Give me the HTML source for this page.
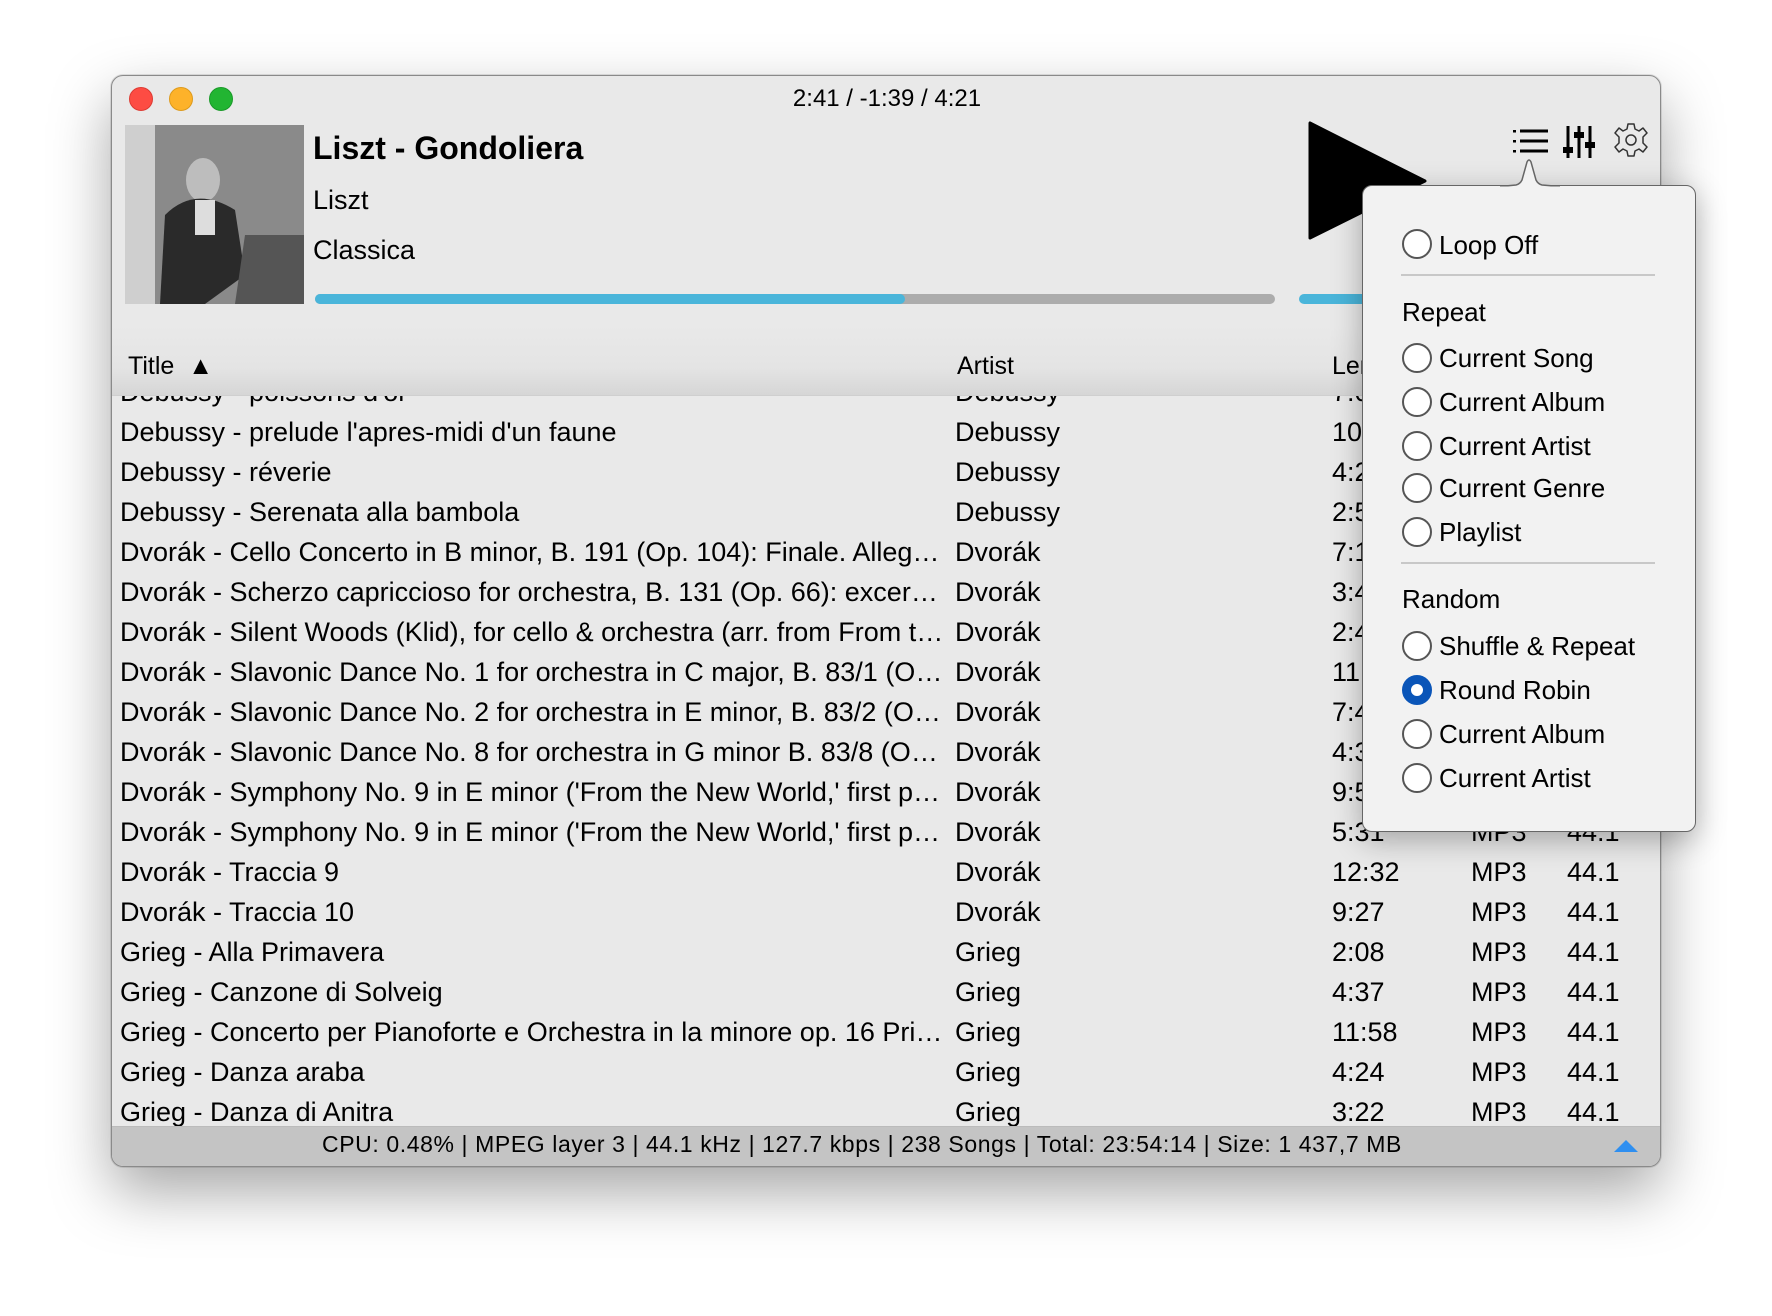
<!DOCTYPE html>
<html><head><meta charset="utf-8"><style>
*{margin:0;padding:0;box-sizing:border-box}
body{width:1772px;height:1316px;background:#fff;font-family:"Liberation Sans",sans-serif;position:relative;overflow:hidden;color:#000}
.win{position:absolute;left:111px;top:75px;width:1550px;height:1092px;border-radius:12px;background:#e9e9e9;border:1px solid #8a8a8a;box-shadow:0 25px 60px rgba(0,0,0,.35),0 0 0 1px rgba(0,0,0,.1);overflow:hidden}
.a{position:absolute;white-space:nowrap}
.tl{position:absolute;top:11px;width:24px;height:24px;border-radius:50%}
.row{position:absolute;left:0;width:1550px;height:40px;font-size:27px;line-height:40px}
.row span{position:absolute;top:0;white-space:nowrap;overflow:hidden;text-overflow:ellipsis}
.pop{position:absolute;left:1362px;top:185px;width:334px;height:647px;background:#f2f2f2;border:1.5px solid #666;border-radius:10px;box-shadow:0 8px 30px rgba(0,0,0,.3)}
.it{position:absolute;left:76px;font-size:26px;line-height:30px;white-space:nowrap}
.rd{position:absolute;left:39px;width:30px;height:30px;border-radius:50%;border:2px solid #555;background:#fff}
.sep{position:absolute;left:38px;width:254px;height:2px;background:#c8c8c8}
</style></head><body>
<div class="win">
  <div class="tl" style="left:17px;background:#fd4c43;border:1px solid #dd3b33"></div>
  <div class="tl" style="left:57px;background:#fdb22a;border:1px solid #dd9a1c"></div>
  <div class="tl" style="left:97px;background:#22b532;border:1px solid #1a9a29"></div>
  <div class="a" style="left:0;width:1550px;text-align:center;top:9px;font-size:24px">2:41 / -1:39 / 4:21</div>
  <div class="a" style="left:13px;top:49px;width:179px;height:179px;">
    <svg width="179" height="179"><rect width="179" height="179" fill="#8a8a8a"/><rect width="30" height="179" fill="#cfcfcf"/><ellipse cx="78" cy="55" rx="17" ry="22" fill="#bdbdbd"/><path d="M40 90 Q70 60 110 85 L120 150 L80 179 L35 179 Z" fill="#2a2a2a"/><rect x="70" y="75" width="20" height="35" fill="#ddd"/><path d="M120 110 L179 110 L179 179 L110 179 Z" fill="#555"/></svg>
  </div>
  <div class="a" style="left:201px;top:54px;font-size:32px;font-weight:bold">Liszt - Gondoliera</div>
  <div class="a" style="left:201px;top:109px;font-size:27px">Liszt</div>
  <div class="a" style="left:201px;top:159px;font-size:27px">Classica</div>
  <div class="a" style="left:203px;top:218px;width:960px;height:10px;border-radius:5px;background:#acacac"><div style="width:590px;height:10px;border-radius:5px;background:#4ab5da"></div></div>
  <div class="a" style="left:1187px;top:218px;width:120px;height:10px;border-radius:5px;background:#4ab5da"></div>
  <svg class="a" style="left:1196px;top:45px" width="120" height="120"><path d="M2 2 L2 117 L117 60 Z" fill="#000" stroke="#000" stroke-width="3" stroke-linejoin="round"/></svg>
  <svg class="a" style="left:1400px;top:50px" width="140" height="40">
    <g stroke="#000" stroke-width="3"><line x1="8" y1="5" x2="36" y2="5"/><line x1="8" y1="15" x2="36" y2="15"/><line x1="8" y1="25" x2="36" y2="25"/></g>
    <g fill="#000"><rect x="1" y="4" width="3" height="2.5"/><rect x="1" y="14" width="3" height="2.5"/><rect x="1" y="24" width="3" height="2.5"/></g>
    <g stroke="#000" stroke-width="3"><line x1="56" y1="0" x2="56" y2="32"/><line x1="67" y1="0" x2="67" y2="32"/><line x1="78" y1="0" x2="78" y2="32"/></g>
    <rect x="51" y="21" width="10" height="6" fill="#000"/><rect x="62" y="6" width="10" height="6" fill="#000"/><rect x="73" y="16" width="10" height="6" fill="#000"/>
  </svg>
  <svg class="a" style="left:1501px;top:46px" width="36" height="36" viewBox="-18 -18 36 36"><path d="M-3 -16 L3 -16 L4 -11 L8 -9 L12 -12 L16 -7 L12 -3 L12 3 L16 7 L12 12 L8 9 L4 11 L3 16 L-3 16 L-4 11 L-8 9 L-12 12 L-16 7 L-12 3 L-12 -3 L-16 -7 L-12 -12 L-8 -9 L-4 -11 Z" fill="none" stroke="#333" stroke-width="1.5" stroke-linejoin="round"/><circle r="5" fill="none" stroke="#333" stroke-width="1.5"/></svg>
  <div class="row" style="top:296px"><span style="left:8px;width:820px">Debussy - poissons d'or</span><span style="left:843px">Debussy</span><span style="left:1220px">7:0</span></div>
  <div class="a" style="left:0;top:250px;width:1550px;height:70px;background:linear-gradient(#e9e9e9,#e4e4e4 60%,#d6d6d6);border-bottom:1px solid #cfcfcf"></div>
  <div class="a" style="left:16px;top:276px;font-size:25px">Title &nbsp;▲</div>
  <div class="a" style="left:845px;top:276px;font-size:25px">Artist</div>
  <div class="a" style="left:1220px;top:276px;font-size:25px">Length</div>
  <div id="rows"></div>
  <div class="a" style="left:0;top:1050px;width:1550px;height:42px;background:#c4c4c4;border-top:1px solid #bbb"></div>
  <div class="a" style="left:0;top:1055px;width:1500px;text-align:center;font-size:23px;letter-spacing:0.6px">CPU: 0.48% | MPEG layer 3 | 44.1 kHz | 127.7 kbps | 238 Songs | Total: 23:54:14 | Size: 1 437,7 MB</div>
  <svg class="a" style="left:1502px;top:1063px" width="24" height="14"><path d="M0 13 L12 1 L24 13 Z" fill="#2f8ff0"/></svg>
</div>
<div class="pop">
  <div class="it" style="top:44px">Loop Off</div><div class="rd" style="top:43px"></div>
  <div class="sep" style="top:88px"></div>
  <div class="it" style="top:111px;left:39px">Repeat</div>
  <div class="it" style="top:157px">Current Song</div><div class="rd" style="top:157px"></div>
  <div class="it" style="top:201px">Current Album</div><div class="rd" style="top:201px"></div>
  <div class="it" style="top:245px">Current Artist</div><div class="rd" style="top:245px"></div>
  <div class="it" style="top:287px">Current Genre</div><div class="rd" style="top:287px"></div>
  <div class="it" style="top:331px">Playlist</div><div class="rd" style="top:331px"></div>
  <div class="sep" style="top:376px"></div>
  <div class="it" style="top:398px;left:39px">Random</div>
  <div class="it" style="top:445px">Shuffle &amp; Repeat</div><div class="rd" style="top:445px"></div>
  <div class="it" style="top:489px">Round Robin</div><div class="rd" style="top:489px;border:9px solid #0a55b8;background:#fff"></div>
  <div class="it" style="top:533px">Current Album</div><div class="rd" style="top:533px"></div>
  <div class="it" style="top:577px">Current Artist</div><div class="rd" style="top:577px"></div>
</div>
<svg style="position:absolute;left:1500px;top:158px" width="60" height="30"><path d="M0 28.5 L16 27 Q20 26 22 22 L27 4 Q29 0 31 4 L36 22 Q38 26 42 27 L60 28.5" fill="#f2f2f2" stroke="#666" stroke-width="1.5"/><rect x="0" y="28.5" width="60" height="2" fill="#f2f2f2"/></svg>
<script>
var d=[["Debussy - prelude l'apres-midi d'un faune","Debussy","10:12"],["Debussy - réverie","Debussy","4:21"],["Debussy - Serenata alla bambola","Debussy","2:56"],["Dvorák - Cello Concerto in B minor, B. 191 (Op. 104): Finale. Allegro moderato","Dvorák","7:15"],["Dvorák - Scherzo capriccioso for orchestra, B. 131 (Op. 66): excerpt from the score","Dvorák","3:40"],["Dvorák - Silent Woods (Klid), for cello & orchestra (arr. from From the Bohemian Forest)","Dvorák","2:47"],["Dvorák - Slavonic Dance No. 1 for orchestra in C major, B. 83/1 (Op. 46/1)","Dvorák","11:02"],["Dvorák - Slavonic Dance No. 2 for orchestra in E minor, B. 83/2 (Op. 46/2)","Dvorák","7:40"],["Dvorák - Slavonic Dance No. 8 for orchestra in G minor B. 83/8 (Op. 46/8)","Dvorák","4:30"],["Dvorák - Symphony No. 9 in E minor ('From the New World,' first performed)","Dvorák","9:51"],["Dvorák - Symphony No. 9 in E minor ('From the New World,' first performed)","Dvorák","5:31"],["Dvorák - Traccia 9","Dvorák","12:32"],["Dvorák - Traccia 10","Dvorák","9:27"],["Grieg - Alla Primavera","Grieg","2:08"],["Grieg - Canzone di Solveig","Grieg","4:37"],["Grieg - Concerto per Pianoforte e Orchestra in la minore op. 16 Prima parte","Grieg","11:58"],["Grieg - Danza araba","Grieg","4:24"],["Grieg - Danza di Anitra","Grieg","3:22"]];
var h="";d.forEach(function(r,i){h+='<div class="row" style="top:'+(336+i*40)+'px"><span style="left:8px;width:826px">'+r[0]+'</span><span style="left:843px">'+r[1]+'</span><span style="left:1220px">'+r[2]+'</span><span style="left:1359px">MP3</span><span style="left:1455px">44.1</span></div>';});
document.getElementById("rows").innerHTML=h;
</script>
</body></html>
